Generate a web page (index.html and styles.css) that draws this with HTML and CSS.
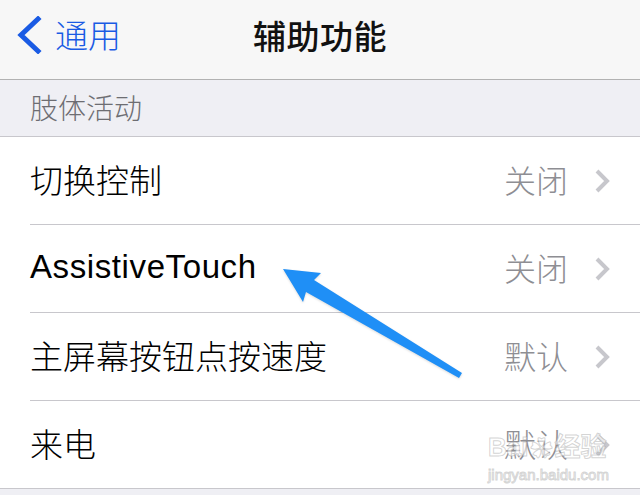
FILE: index.html
```html
<!DOCTYPE html>
<html lang="zh-CN">
<head>
    <meta charset="UTF-8">
    <meta name="viewport" content="width=device-width, initial-scale=1.0">
    <title>辅助功能</title>
    <link rel="stylesheet" href="styles.css">
</head>
<body>
    <div class="screen">
        <header class="navbar">
            <a class="back" href="#">
                <svg class="back-icon" width="26" height="38" viewBox="0 0 26 38">
                    <polyline points="22,3 5,19 22,35" fill="none" stroke="#1a5be4" stroke-width="5" stroke-linecap="square"/>
                </svg>
                <span>通用</span>
            </a>
            <h1 class="title">辅助功能</h1>
        </header>

        <div class="section-header">肢体活动</div>

        <ul class="list">
            <li class="row">
                <div class="row-inner">
                    <span class="label">切换控制</span>
                    <span class="value">关闭</span>
                    <svg class="chevron" width="16" height="24" viewBox="0 0 16 24"><polyline points="3,2 13,12 3,22" fill="none" stroke="#c7c7cc" stroke-width="4"/></svg>
                </div>
            </li>
            <li class="row">
                <div class="row-inner">
                    <span class="label latin">AssistiveTouch</span>
                    <span class="value">关闭</span>
                    <svg class="chevron" width="16" height="24" viewBox="0 0 16 24"><polyline points="3,2 13,12 3,22" fill="none" stroke="#c7c7cc" stroke-width="4"/></svg>
                </div>
            </li>
            <li class="row">
                <div class="row-inner">
                    <span class="label">主屏幕按钮点按速度</span>
                    <span class="value">默认</span>
                    <svg class="chevron" width="16" height="24" viewBox="0 0 16 24"><polyline points="3,2 13,12 3,22" fill="none" stroke="#c7c7cc" stroke-width="4"/></svg>
                </div>
            </li>
            <li class="row">
                <div class="row-inner">
                    <span class="label">来电</span>
                    <span class="value">默认</span>
                    <svg class="chevron" width="16" height="24" viewBox="0 0 16 24"><polyline points="3,2 13,12 3,22" fill="none" stroke="#c7c7cc" stroke-width="4"/></svg>
                </div>
            </li>
        </ul>

        <!-- annotation arrow drawn over the list -->
        <svg class="annotation" width="640" height="495" viewBox="0 0 640 495">
            <polygon points="283,269 321,273 314,280 462,373 459,378 306,292 303,302" fill="#1f8ff6"/>
        </svg>

        <div class="watermark">
            <div class="wm-logo">Bai<span class="wm-paw">✿</span>经验</div>
            <div class="wm-url">jingyan.baidu.com</div>
        </div>
    </div>
</body>
</html>
```

FILE: styles.css
```css
* {
    box-sizing: border-box;
}

body {
    margin: 0;
    background-color: #efeff4;
    font-family: "Liberation Sans", "Noto Sans CJK SC", sans-serif;
}

.screen {
    position: relative;
    width: 640px;
    height: 495px;
    overflow: hidden;
}

.navbar {
    position: relative;
    height: 80px;
    padding-bottom: 9px;
    display: flex;
    align-items: center;
    justify-content: center;
    background-color: #f7f7f7;
    border-bottom: 1px solid #b2b2b2;
}

.back {
    position: absolute;
    left: 16px;
    top: 16px;
    display: flex;
    align-items: center;
    gap: 13px;
    color: #1a5be4;
    text-decoration: none;
    font-family: "Noto Sans CJK SC", sans-serif;
    font-size: 33px;
    font-weight: 300;
    line-height: 38px;
}

.back span {
    margin-top: -3px;
}

.back-icon {
    display: block;
}

.title {
    margin: 0;
    font-family: "Noto Sans CJK SC", sans-serif;
    font-size: 33px;
    font-weight: 500;
    color: #111;
    letter-spacing: 0.5px;
}

.section-header {
    height: 57px;
    padding-left: 30px;
    padding-bottom: 2px;
    display: flex;
    align-items: center;
    font-family: "Noto Sans CJK SC", sans-serif;
    font-size: 28px;
    font-weight: 300;
    color: #6d6d72;
    border-bottom: 1px solid #c8c7cc;
}

.list {
    list-style: none;
    margin: 0;
    padding: 0;
    background-color: #fff;
    border-bottom: 1px solid #c8c7cc;
}

.row {
    padding-left: 30px;
}

.row-inner {
    height: 88px;
    display: flex;
    align-items: center;
    padding-right: 30px;
    padding-bottom: 4px;
    border-bottom: 1px solid #c8c7cc;
}

.row:last-child .row-inner {
    height: 87px;
    border-bottom: none;
}

.label {
    flex: 1;
    font-family: "Noto Sans CJK SC", sans-serif;
    font-size: 33px;
    font-weight: 300;
    color: #000;
}

.label.latin {
    font-family: "Liberation Sans", sans-serif;
    font-size: 33px;
    font-weight: normal;
    letter-spacing: 0.6px;
}

.value {
    font-family: "Noto Sans CJK SC", sans-serif;
    font-size: 32px;
    font-weight: 300;
    color: #8e8e93;
    margin-right: 26px;
}

.chevron {
    display: block;
    margin-top: 4px;
}

.annotation {
    position: absolute;
    left: 0;
    top: 0;
    pointer-events: none;
    filter: drop-shadow(0 1px 1px rgba(0, 0, 0, 0.15));
}

.watermark {
    position: absolute;
    left: 488px;
    top: 432px;
    color: rgba(255, 255, 255, 0.6);
    -webkit-text-stroke: 1px rgba(160, 160, 160, 0.45);
    pointer-events: none;
}

.wm-logo {
    font-family: "Liberation Sans", "Noto Sans CJK SC", sans-serif;
    font-size: 26px;
    font-weight: bold;
    line-height: 30px;
}

.wm-paw {
    font-size: 22px;
    margin: 0 2px;
}

.wm-url {
    font-family: "Liberation Sans", sans-serif;
    font-size: 15px;
    line-height: 18px;
    margin-top: 2px;
}
```
